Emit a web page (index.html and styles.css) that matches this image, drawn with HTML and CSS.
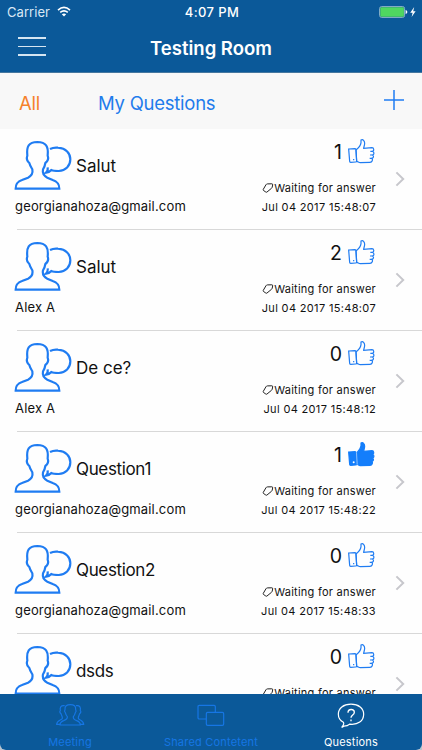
FILE: index.html
```
<!DOCTYPE html>
<html lang="en">
<head>
<meta charset="utf-8">
<title>Testing Room</title>
<link rel="stylesheet" href="styles.css">
</head>
<body>
<svg class="defs" aria-hidden="true">
  <symbol id="avatar" viewBox="42 35 174 150">
    <path d="M47 181H178C178 166 172 160 158 155L142 148C130 142 127 133 129 123C133 117 135 112 136 104C143 99 146 90 143 82C146 54 138 42 112 41C86 42 79 54 82 82C79 90 82 99 88 104C90 112 94 118 97 123C99 133 96 142 84 148L66 155C52 160 47 166 47 181Z"/>
    <path d="M150 62C158 58 166 57 174 58C198 60 211 75 211 93C211 113 197 127 176 128C169 128 160 128 154 125C150 130 145 132 138 133C144 128 144 124 143 117"/>
  </symbol>
  <symbol id="thumb" viewBox="322 30 84 78">
    <path d="M327 63L346 62Q349 62 349 65L351 100Q351 102 348 102L333 103Q330 103 330 100Z"/>
    <path d="M349 66C358 59 363 53 364 44L364 36C370 32 375 39 375 46C375 53 372 57 372 61L397 59C403 59 404 68 399 70C404 72 404 79 399 81C403 84 402 90 397 91C400 95 398 103 391 103L362 104C357 104 355 100 351 100Z"/>
    <path d="M392 70H399M391 81H399M390 91H397"/>
    <path d="M342 93V97"/>
  </symbol>
  <symbol id="thumb-voted" viewBox="322 30 84 78">
    <path d="M327 63L346 62Q349 62 349 65L351 100Q351 102 348 102L333 103Q330 103 330 100Z"/>
    <path d="M351 66C358 59 363 53 364 44L364 36C370 32 375 39 375 46C375 53 372 57 372 61L397 59C403 59 404 68 399 70C404 72 404 79 399 81C403 84 402 90 397 91C400 95 398 103 391 103L362 104C357 104 355 100 353 100Z"/>
    <path class="gap" d="M350.5 64L352.5 101"/>
    <circle class="hole" cx="342" cy="94" r="3"/>
  </symbol>
  <symbol id="tag" viewBox="0 0 12 12">
    <path d="M1.3 7.3L4 2.7Q4.5 1.9 5.4 1.9L9.8 1.8Q10.9 1.8 10.7 2.9L10.2 5.2Q10 5.9 9.5 6.3L5 10Q4.4 10.5 3.8 10L1.4 8.4Q.9 8 1.3 7.3Z"/>
  </symbol>
  <symbol id="chev" viewBox="0 0 10 16"><path d="M1.4 1.4L8.2 8L1.4 14.6"/></symbol>
</svg>
<div class="phone">
  <header class="top">
    <div class="status">
      <div class="carrier"><span>Carrier</span>
        <svg class="wifi" viewBox="0 0 14 11"><path d="M1 4.1Q7-1.3 13 4.1M3.2 6.4Q7 3.2 10.8 6.4"/><path class="fill" d="M4.8 8.2Q7 6.6 9.2 8.2L7 10.6Z"/></svg>
      </div>
      <div class="clock">4:07 PM</div>
      <div class="power">
        <svg viewBox="0 0 38 12"><rect class="shell" x=".6" y=".6" width="25" height="10.8" rx="2"/><rect class="level" x="1.3" y="1.3" width="23.6" height="9.4" rx="1.2"/><path class="white" d="M26.6 4Q28.4 4.3 28.4 6T26.6 8ZM35.2 1L31.2 6.7H33.6L32.6 11L36.6 5.2H34.2Z"/></svg>
      </div>
    </div>
    <div class="nav">
      <div class="menu"><i></i><i></i><i></i></div>
      <h1>Testing Room</h1>
    </div>
  </header>
  <nav class="filters">
    <span class="all">All</span><span class="mine">My Questions</span>
    <svg class="plus" viewBox="0 0 20 20"><path d="M10 0V20M0 10H20"/></svg>
  </nav>
  <main class="list">
    <article class="row">
      <div class="left"><div class="who"><svg class="avatar"><use href="#avatar"/></svg><span class="title">Salut</span></div><div class="author">georgianahoza@gmail.com</div></div>
      <div class="right"><div class="votes"><span>1</span><svg class="thumb"><use href="#thumb"/></svg></div><div class="state"><svg class="tag"><use href="#tag"/></svg><span>Waiting for answer</span></div><div class="date">Jul 04 2017 15:48:07</div></div>
      <svg class="chev"><use href="#chev"/></svg>
    </article>
    <article class="row">
      <div class="left"><div class="who"><svg class="avatar"><use href="#avatar"/></svg><span class="title">Salut</span></div><div class="author">Alex A</div></div>
      <div class="right"><div class="votes"><span>2</span><svg class="thumb"><use href="#thumb"/></svg></div><div class="state"><svg class="tag"><use href="#tag"/></svg><span>Waiting for answer</span></div><div class="date">Jul 04 2017 15:48:07</div></div>
      <svg class="chev"><use href="#chev"/></svg>
    </article>
    <article class="row">
      <div class="left"><div class="who"><svg class="avatar"><use href="#avatar"/></svg><span class="title">De ce?</span></div><div class="author">Alex A</div></div>
      <div class="right"><div class="votes"><span>0</span><svg class="thumb"><use href="#thumb"/></svg></div><div class="state"><svg class="tag"><use href="#tag"/></svg><span>Waiting for answer</span></div><div class="date">Jul 04 2017 15:48:12</div></div>
      <svg class="chev"><use href="#chev"/></svg>
    </article>
    <article class="row">
      <div class="left"><div class="who"><svg class="avatar"><use href="#avatar"/></svg><span class="title long">Question1</span></div><div class="author">georgianahoza@gmail.com</div></div>
      <div class="right"><div class="votes"><span>1</span><svg class="thumb voted"><use href="#thumb-voted"/></svg></div><div class="state"><svg class="tag"><use href="#tag"/></svg><span>Waiting for answer</span></div><div class="date">Jul 04 2017 15:48:22</div></div>
      <svg class="chev"><use href="#chev"/></svg>
    </article>
    <article class="row">
      <div class="left"><div class="who"><svg class="avatar"><use href="#avatar"/></svg><span class="title long">Question2</span></div><div class="author">georgianahoza@gmail.com</div></div>
      <div class="right"><div class="votes"><span>0</span><svg class="thumb"><use href="#thumb"/></svg></div><div class="state"><svg class="tag"><use href="#tag"/></svg><span>Waiting for answer</span></div><div class="date">Jul 04 2017 15:48:33</div></div>
      <svg class="chev"><use href="#chev"/></svg>
    </article>
    <article class="row">
      <div class="left"><div class="who"><svg class="avatar"><use href="#avatar"/></svg><span class="title long">dsds</span></div></div>
      <div class="right"><div class="votes"><span>0</span><svg class="thumb"><use href="#thumb"/></svg></div><div class="state"><svg class="tag"><use href="#tag"/></svg><span>Waiting for answer</span></div></div>
      <svg class="chev"><use href="#chev"/></svg>
    </article>
  </main>
  <footer class="tabs">
    <div class="tab">
      <svg viewBox="165 206 90 70"><path d="M180 271H241C241 262 236 260 230 258C222 255 219 252 220 246C224 242 225 238 226 234C229 231 229 228 227 225C228 214 222 210 211 210C200 210 194 214 195 225C193 228 193 231 196 234C197 238 198 242 202 246C203 252 199 255 191 258C185 260 180 262 180 271ZM194 213C183 211 179 217 181 228C178 231 180 235 183 237C184 242 188 246 187 251C186 257 170 256 170 269H179M228 213C239 211 243 217 241 228C244 231 242 235 239 237C238 242 234 246 235 251C236 257 251 256 251 269H242"/></svg>
      <span>Meeting</span>
    </div>
    <div class="tab shared">
      <svg viewBox="0 0 90 70"><path d="M31 47H10Q6 47 6 43V10Q6 6 10 6H54Q58 6 58 10V27M35 27H79Q83 27 83 31V62Q83 66 79 66H35Q31 66 31 62V31Q31 27 35 27Z"/></svg>
      <span>Shared Contetent</span>
    </div>
    <div class="tab active">
      <svg viewBox="376 203 90 80"><path d="M400 275C409 275 414 272 417 269C442 272 459 259 459 239C459 221 444 209 421 209C398 209 383 221 383 239C383 249 389 258 398 263C401 267 399 272 393 279Z"/><path class="mark" d="M412 235C412 222 431 222 431 233C431 242 421 241 421 250M421 255V260"/></svg>
      <span>Questions</span>
    </div>
  </footer>
</div>
</body>
</html>
```
FILE: styles.css
```
* { box-sizing: border-box; }
body { margin: 0; background: #b9c4ce; font-family: Inter, "Liberation Sans", sans-serif; color: #111; }
svg { display: block; fill: none; stroke: #1f7cf2; flex: none; }
.defs { position: absolute; width: 0; height: 0; }
.phone { width: 422px; height: 750px; overflow: hidden; display: flex; flex-direction: column; background: #fefefe; border-radius: 0 0 6px 6px; }
.top { height: 72.5px; flex: none; background: #0b5999; color: #fff; border-bottom: 1px solid #46779f; }
.status { height: 24px; display: grid; grid-template-columns: 1fr 1fr 1fr; align-items: center; padding: 0 5px 0 7px; font-size: 13px; line-height: 24px; }
.carrier { display: flex; align-items: center; gap: 7px; letter-spacing: .05px; color: #d9e8f5; }
.wifi { width: 14px; height: 11px; stroke: #fff; stroke-width: 1.6; margin-top: -2px; }
.wifi .fill { fill: #fff; stroke: none; }
.clock { text-align: center; font-weight: 500; letter-spacing: .4px; }
.power svg { width: 38px; height: 12px; margin-left: auto; }
.shell { stroke: #8fb6c9; }
.level { fill: #4fd760; stroke: none; }
.white { fill: #fff; stroke: none; }
.nav { display: grid; grid-template-columns: 100px 1fr 100px; align-items: center; height: 48px; }
.menu { width: 28px; margin: -3px 0 0 18px; display: grid; gap: 7px; }
.menu i { height: 1.5px; background: #d5e5f1; }
h1 { margin: 0; text-align: center; font-size: 18.5px; line-height: 24px; font-weight: 600; white-space: nowrap; }
.filters { height: 56px; flex: none; background: #f8f8f8; display: flex; align-items: center; padding: 5px 18px 0 19px; color: #1f7cec; font-size: 18.5px; line-height: 28px; letter-spacing: -.25px; }
.all { color: #f5812c; width: 79px; }
.plus { width: 20px; height: 20px; margin: -7px 0 0 auto; stroke-width: 1.5; }
.list { flex: 1; min-height: 0; overflow: hidden; }
.row { height: 101.15px; padding: 11px 17px 0 14px; display: flex; align-items: flex-start; background: linear-gradient(#d8d8d8, #d8d8d8) 17px 100% / 405px 1px no-repeat; }
.left { flex: 1; }
.who { display: flex; align-items: center; gap: 4px; }
.avatar { width: 58px; height: 50px; stroke-width: 6.5; }
.title { font-size: 17px; line-height: 24px; padding-top: 2px; }
.long { letter-spacing: -.35px; }
.author { margin: 7px 0 0 1px; font-size: 13px; line-height: 18px; letter-spacing: .17px; }
.right { width: 125px; margin-top: -1px; }
.votes { display: flex; justify-content: flex-end; align-items: center; gap: 5px; font-size: 19.5px; line-height: 26px; }
.thumb { width: 28px; height: 26px; stroke-width: 3.6; margin: -2px 1px 0 0; }
.voted { fill: #147efb; stroke: #147efb; }
.gap { stroke: #cfe4fe; stroke-width: 2; }
.hole { fill: #fff; stroke: none; }
.state { margin-top: 14px; display: flex; justify-content: flex-end; align-items: center; font-size: 11px; line-height: 18px; white-space: nowrap; letter-spacing: .26px; }
.tag { width: 12px; height: 12px; stroke: #222; stroke-width: 1; }
.date { font-size: 11px; line-height: 18px; text-align: right; white-space: nowrap; margin-top: 1px; letter-spacing: .34px; }
.chev { width: 10px; height: 16px; stroke: #c7c7cc; stroke-width: 2; margin: 31px 0 0 19px; }
.tabs { height: 56px; flex: none; background: #0b5999; display: grid; grid-template-columns: 140px 142px 1fr; color: #1676e4; font-size: 11px; }
.tab { display: flex; flex-direction: column; align-items: center; justify-content: space-between; padding: 9px 0 1px; line-height: 14px; white-space: nowrap; letter-spacing: .2px; }
.tab svg { width: 30px; height: 24px; stroke-width: 3.6; stroke: #1676e4; }
.tab.active { color: #fff; padding-top: 8px; padding-right: 8px; padding-left: 6px; }
.tab.active svg { stroke: #fff; width: 30px; height: 27px; }
.tab .mark { stroke-width: 4; }
```
